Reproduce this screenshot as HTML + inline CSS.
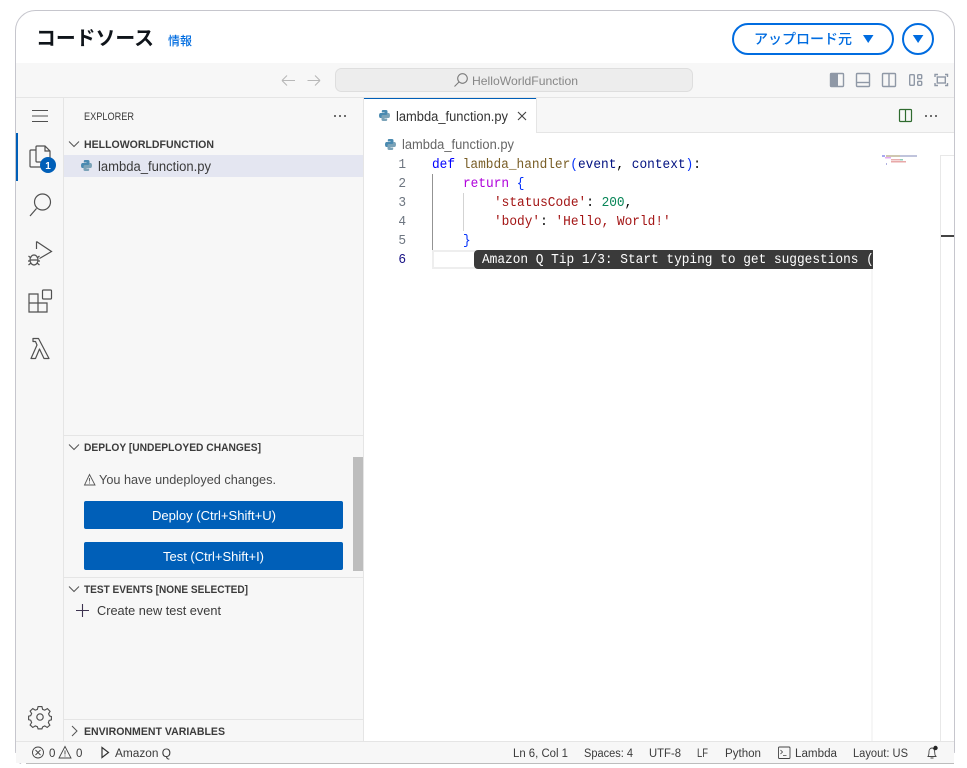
<!DOCTYPE html>
<html lang="ja"><head><meta charset="utf-8"><title>コードソース</title>
<style>
html,body{margin:0;padding:0;background:#fff;width:967px;height:768px;overflow:hidden}
svg{display:block}
text{font-family:"Liberation Sans","Noto Sans CJK JP",sans-serif;white-space:pre}
.s{font-size:12px;fill:#3b3b3b}
.b{font-size:11px;font-weight:bold;fill:#3b3b3b}
.m{font-family:"Liberation Mono",monospace;font-size:14px}
.st{font-size:11.5px;fill:#3b3b3b}
.ic{fill:none;stroke:#505050;stroke-width:1.2}
.lay{fill:none;stroke:#8f98a6;stroke-width:1.4}
</style></head><body>
<svg width="967" height="768" viewBox="0 0 967 768" xmlns="http://www.w3.org/2000/svg">
<defs>
<g id="py">
<g id="pyh"><path d="M4 0H7C8 0 8.500 .6 8.500 1.500V4.500C8.500 5.400 8 6 7 6H4C3.200 6 2.800 6.500 2.800 7.200V8H1.500C.5 8 0 7 0 5.500C0 4 .6 3 1.500 3H5.500V2.500H2.800V1.500C2.800 .5 3 0 4 0Z" fill="#4a8ab0"/></g>
<path d="M4 0H7C8 0 8.500 .6 8.500 1.500V4.500C8.500 5.400 8 6 7 6H4C3.200 6 2.800 6.500 2.800 7.200V8H1.500C.5 8 0 7 0 5.500C0 4 .6 3 1.500 3H5.500V2.500H2.800V1.500C2.800 .5 3 0 4 0Z" fill="#7ba3b8" transform="rotate(180 5.500 5.500)"/>
</g>
</defs>

<!-- card -->
<rect x="15.500" y="10.500" width="939" height="760" rx="20" fill="#fff" stroke="#c6c6cd"/>
<rect x="16" y="63" width="938" height="700" fill="#f7f7f7"/>
<rect x="0" y="764" width="967" height="10" fill="#fff"/>
<rect x="15" y="753" width="1" height="12" fill="#fff"/>
<rect x="954" y="753" width="2" height="12" fill="#fff"/>

<!-- header -->
<text x="36" y="45" font-size="20" font-weight="bold" fill="#0f141a" textLength="118" lengthAdjust="spacingAndGlyphs">コードソース</text>
<text x="168" y="45" font-size="12" font-weight="500" fill="#006ce0" textLength="24" lengthAdjust="spacingAndGlyphs">情報</text>
<rect x="733" y="24" width="160" height="30" rx="15" fill="#fff" stroke="#006ce0" stroke-width="2"/>
<text x="754" y="44" font-size="14" font-weight="500" fill="#006ce0" textLength="98" lengthAdjust="spacingAndGlyphs">アップロード元</text>
<path d="M863 35H873.500L868.200 43Z" fill="#006ce0"/>
<circle cx="918" cy="39" r="15" fill="#fff" stroke="#006ce0" stroke-width="2"/>
<path d="M912.800 35H923.400L918.100 43Z" fill="#006ce0"/>

<!-- title bar -->
<path d="M282 80.500H295M282 80.500L287 75.500M282 80.500L287 85.500M320 80.500H307.500M320 80.500L315 75.500M320 80.500L315 85.500" fill="none" stroke="#b8b8b8" stroke-width="1.100"/>
<rect x="335.500" y="68.500" width="357" height="23" rx="6" fill="#ededed" stroke="#dedede"/>
<circle cx="462.500" cy="78.500" r="4.800" fill="none" stroke="#7a7a7a" stroke-width="1.100"/>
<path d="M459 82L454.500 86.500" stroke="#7a7a7a" stroke-width="1.100"/>
<text x="472" y="85" font-size="12" fill="#868686" textLength="106" lengthAdjust="spacingAndGlyphs">HelloWorldFunction</text>

<g class="lay">
<rect x="830.500" y="73.500" width="13" height="13" rx="1"/>
<rect x="856.500" y="73.500" width="13" height="13" rx="1"/><path d="M856.500 82.500H869.500"/>
<rect x="882.500" y="73.500" width="13" height="13" rx="1"/><path d="M889 73.500V86.500"/>
<rect x="909.700" y="74.700" width="4.600" height="10.600" rx="1"/><rect x="917.700" y="74.700" width="4" height="4" rx="1"/><rect x="917.700" y="81.300" width="4" height="4" rx="1"/>
<path d="M935 77V74.500H938M945 74.500H947.500V77M947.500 83V85.500H945M938 85.500H935V83"/><rect x="937.300" y="77" width="8" height="6"/>
</g>
<rect x="830" y="73" width="8" height="14" rx="1" fill="#8f98a6"/>

<!-- frame lines -->
<rect x="16" y="97" width="938" height="1" fill="#e5e5e5"/>
<rect x="63" y="98" width="1" height="643" fill="#e5e5e5"/>
<rect x="363" y="98" width="1" height="643" fill="#e5e5e5"/>

<!-- editor bg -->
<rect x="364" y="133" width="590" height="608" fill="#fff"/>
<rect x="364" y="132" width="590" height="1" fill="#e5e5e5"/>
<rect x="364" y="98" width="172" height="35" fill="#fff"/>
<rect x="364" y="98" width="172" height="1" fill="#005fb8"/>
<rect x="536" y="98" width="1" height="34" fill="#e5e5e5"/>

<!-- activity bar -->
<path d="M32 110.500H48M32 116H48M32 121.500H48" stroke="#505050" stroke-width="1.100" fill="none"/>
<rect x="16" y="133" width="2" height="48" fill="#005fb8"/>
<g class="ic" stroke-width="1.400">
<path d="M36 150H31C30 150 30 151 30 151V166C30 167 31 167 31 167H43C44 167 44 166 44 166V163"/>
<path d="M37 146H45L50 151V162H37C36.400 162 36 161.600 36 161V147C36 146.400 36.400 146 37 146ZM45 146V151H50"/>
</g>
<circle cx="48" cy="165" r="8" fill="#005fb8"/>
<text x="48" y="169" font-size="10" font-weight="bold" fill="#fff" text-anchor="middle">1</text>

<g class="ic" stroke-width="1.300">
<circle cx="42.500" cy="202" r="8"/><path d="M36.500 208.500L30 216"/>
<path d="M36.500 241.500L51.500 251.500L39.500 258.500M36.500 241.500V249"/>
<ellipse cx="34" cy="260" rx="4" ry="5"/><path d="M28.500 256L31 258M28 261H30M28.500 265L31 263M39.500 256L37 258M40 261H38M39.500 265L37 263M30 260H38"/>
<path d="M29 294H38V303H47V312H29ZM29 303H38V312"/><rect x="42.500" y="290" width="9" height="9" rx="1"/>
<path d="M33 338.500H38.500L49 358.500H44L39.500 349L35.500 358.500H31L37 345L35.500 341.500H33Z" stroke-linejoin="round"/>
</g>
<g transform="translate(40 717)" class="ic" stroke-width="1.300">
<circle r="3.200"/>
<path d="M-2 -11H2L2.800 -8L5 -7.200L7.800 -8.800L10.600 -6L9 -3.400L10 -1.200L12 -.5V3L9.600 3.600L8.800 6L10.400 8.600L7.600 11L5 9.400L2.800 10.400L2 12.500H-2L-2.800 10.200L-5 9.400L-7.600 11L-10.400 8.400L-8.800 5.800L-9.800 3.400L-12 2.800V-.8L-9.800 -1.400L-8.800 -3.600L-10.400 -6.200L-7.600 -8.800L-5 -7.200L-2.800 -8Z" transform="scale(.95)"/>
</g>

<!-- sidebar -->
<text class="s" x="84" y="120" style="font-size:11px" textLength="50" lengthAdjust="spacingAndGlyphs">EXPLORER</text>
<g fill="#424242"><circle cx="335" cy="116" r="1"/><circle cx="340" cy="116" r="1"/><circle cx="345" cy="116" r="1"/></g>
<path d="M69 141.500L74 146.500L79 141.500" fill="none" stroke="#555" stroke-width="1"/>
<text class="b" x="84" y="148" textLength="130" lengthAdjust="spacingAndGlyphs">HELLOWORLDFUNCTION</text>
<rect x="64" y="155" width="299" height="22" fill="#e4e6f1"/>
<use href="#py" x="81" y="160"/>
<text x="98" y="171" font-size="13.500" fill="#3b3b3b" textLength="113" lengthAdjust="spacingAndGlyphs">lambda_function.py</text>

<rect x="64" y="435" width="299" height="1" fill="#e5e5e5"/>
<path d="M69 444.500L74 449.500L79 444.500" fill="none" stroke="#555" stroke-width="1"/>
<text class="b" x="84" y="451" textLength="177" lengthAdjust="spacingAndGlyphs">DEPLOY [UNDEPLOYED CHANGES]</text>
<rect x="353" y="457" width="10" height="114" fill="#bdbdbd"/>
<path d="M89.500 474.500L95 485H84.500ZM89.500 478V481.500M89.500 482.500V483.500" fill="none" stroke="#555" stroke-width=".9"/>
<text x="99" y="484" font-size="12.500" fill="#4a4a4a" textLength="177" lengthAdjust="spacingAndGlyphs">You have undeployed changes.</text>
<rect x="84" y="501" width="259" height="28" rx="2" fill="#005fb8"/>
<text x="152" y="520" font-size="13" fill="#fff" textLength="124" lengthAdjust="spacingAndGlyphs">Deploy (Ctrl+Shift+U)</text>
<rect x="84" y="542" width="259" height="28" rx="2" fill="#005fb8"/>
<text x="163" y="561" font-size="13" fill="#fff" textLength="101" lengthAdjust="spacingAndGlyphs">Test (Ctrl+Shift+I)</text>

<rect x="64" y="577" width="299" height="1" fill="#e5e5e5"/>
<path d="M69 586.500L74 591.500L79 586.500" fill="none" stroke="#555" stroke-width="1"/>
<text class="b" x="84" y="593" textLength="164" lengthAdjust="spacingAndGlyphs">TEST EVENTS [NONE SELECTED]</text>
<path d="M82.500 604V617M76 610.500H89" stroke="#3d3350" stroke-width="1.100" fill="none"/>
<text x="97" y="615" font-size="12.500" fill="#3b3b3b" textLength="124" lengthAdjust="spacingAndGlyphs">Create new test event</text>

<rect x="64" y="719" width="299" height="1" fill="#e5e5e5"/>
<path d="M72 726L77 731L72 736" fill="none" stroke="#555" stroke-width="1"/>
<text class="b" x="84" y="735" textLength="141" lengthAdjust="spacingAndGlyphs">ENVIRONMENT VARIABLES</text>

<!-- tabs -->
<use href="#py" x="379" y="110"/>
<text x="396" y="121" font-size="13.500" fill="#333" textLength="112" lengthAdjust="spacingAndGlyphs">lambda_function.py</text>
<path d="M518 112L526 120M526 112L518 120" stroke="#424242" stroke-width="1.100" fill="none"/>
<rect x="899.500" y="109.500" width="12" height="12" rx="1" fill="none" stroke="#2f6b2f" stroke-width="1.200"/>
<path d="M905.500 109.500V121.500" stroke="#2f6b2f" stroke-width="1.200"/>
<g fill="#424242"><circle cx="926" cy="116" r="1"/><circle cx="931" cy="116" r="1"/><circle cx="936" cy="116" r="1"/></g>

<!-- breadcrumb -->
<use href="#py" x="385" y="139"/>
<text x="402" y="149" font-size="13.500" fill="#666" textLength="112" lengthAdjust="spacingAndGlyphs">lambda_function.py</text>

<!-- code -->
<g fill="#6e7681" text-anchor="end">
<text class="m" transform="translate(406 168) scale(.9155 1)">1</text>
<text class="m" transform="translate(406 187) scale(.9155 1)">2</text>
<text class="m" transform="translate(406 206) scale(.9155 1)">3</text>
<text class="m" transform="translate(406 225) scale(.9155 1)">4</text>
<text class="m" transform="translate(406 244) scale(.9155 1)">5</text>
<text class="m" transform="translate(406 263) scale(.9155 1)" fill="#171184">6</text>
</g>
<rect x="433" y="251" width="441" height="17" fill="#fff" stroke="#eee" stroke-width="2"/>
<rect x="432" y="174" width="1" height="76" fill="#939393"/>
<rect x="463" y="193" width="1" height="38" fill="#d3d3d3"/>

<text class="m" transform="translate(432 168) scale(.9155 1)"><tspan fill="#0000ff">def</tspan><tspan fill="#000"> </tspan><tspan fill="#795e26">lambda_handler</tspan><tspan fill="#0431fa">(</tspan><tspan fill="#001080">event</tspan><tspan fill="#000">, </tspan><tspan fill="#001080">context</tspan><tspan fill="#0431fa">)</tspan><tspan fill="#000">:</tspan></text>
<text class="m" transform="translate(463 187) scale(.9155 1)"><tspan fill="#af00db">return</tspan><tspan fill="#000"> </tspan><tspan fill="#0431fa">{</tspan></text>
<text class="m" transform="translate(494 206) scale(.9155 1)"><tspan fill="#a31515">'statusCode'</tspan><tspan fill="#000">: </tspan><tspan fill="#098658">200</tspan><tspan fill="#000">,</tspan></text>
<text class="m" transform="translate(494 225) scale(.9155 1)"><tspan fill="#a31515">'body'</tspan><tspan fill="#000">: </tspan><tspan fill="#a31515">'Hello, World!'</tspan></text>
<text class="m" transform="translate(463 244) scale(.9155 1)" fill="#0431fa">}</text>

<rect x="474" y="250" width="402" height="19" rx="4" fill="#3a3a3a"/>
<text class="m" transform="translate(482 263) scale(.9155 1)" fill="#fff">Amazon Q Tip 1/3: Start typing to get suggestions (</text>

<!-- minimap -->
<rect x="871" y="269" width="2" height="472" fill="#f6f6f6"/>
<rect x="873" y="155" width="67" height="586" fill="#fff"/>
<rect x="940" y="155" width="14" height="1" fill="#e8e8e8"/>
<rect x="940" y="155" width="1" height="586" fill="#e8e8e8"/>
<rect x="941" y="235" width="13" height="2" fill="#444"/>
<rect x="882" y="155" width="3" height="2" fill="#a8a8f0"/><rect x="886" y="155" width="14" height="2" fill="#cfc7b0"/><rect x="900" y="155" width="17" height="2" fill="#c0c4dc"/>
<rect x="885" y="157" width="6" height="1.500" fill="#e5a8f0"/>
<rect x="891" y="159" width="9" height="1.500" fill="#e8b0b0"/><rect x="900" y="159" width="3" height="1.500" fill="#90cdb8"/>
<rect x="891" y="161" width="15" height="1.500" fill="#e8a8a8"/>
<rect x="886" y="163" width="1" height="2" fill="#b0b0e0"/>

<!-- status bar -->
<rect x="16" y="741" width="938" height="22" fill="#f7f7f7"/>
<rect x="16" y="741" width="938" height="1" fill="#e5e5e5"/>
<rect x="26" y="763" width="928" height="1" fill="#bdbdbd"/>
<circle cx="38" cy="752.500" r="5.500" fill="none" stroke="#444" stroke-width=".9"/>
<path d="M35.500 750L40.500 755M40.500 750L35.500 755" stroke="#444" stroke-width=".9"/>
<text class="st" x="49" y="757">0</text>
<path d="M65 746.500L71 758H59ZM65 750.500V754.500M65 755.500V756.500" fill="none" stroke="#444" stroke-width=".9"/>
<text class="st" x="76" y="757">0</text>
<path d="M102 747.500L108.500 752.500L102 757.500Z" fill="none" stroke="#333" stroke-width="1.200"/>
<text class="st" x="115" y="757" textLength="56" lengthAdjust="spacingAndGlyphs">Amazon Q</text>
<text class="st" x="513" y="757" textLength="55" lengthAdjust="spacingAndGlyphs">Ln 6, Col 1</text>
<text class="st" x="584" y="757" textLength="49" lengthAdjust="spacingAndGlyphs">Spaces: 4</text>
<text class="st" x="649" y="757" textLength="32" lengthAdjust="spacingAndGlyphs">UTF-8</text>
<text class="st" x="697" y="757" textLength="11" lengthAdjust="spacingAndGlyphs">LF</text>
<text class="st" x="725" y="757" textLength="36" lengthAdjust="spacingAndGlyphs">Python</text>
<rect x="778.500" y="747" width="11.500" height="11.500" rx="1" fill="none" stroke="#444" stroke-width=".9"/>
<path d="M780.500 750L782.500 752L780.500 754M783 755.500H786.500" fill="none" stroke="#444" stroke-width=".8"/>
<text class="st" x="795" y="757" textLength="42" lengthAdjust="spacingAndGlyphs">Lambda</text>
<text class="st" x="853" y="757" textLength="55" lengthAdjust="spacingAndGlyphs">Layout: US</text>
<path d="M928 756.500C929 755 929 753 929 751.500C929 749.500 930.500 748 932 748C933 748 934 749 934.500 750.500L935 755C935.500 756 936 756.500 936.500 756.500ZM930.500 758H933.500" fill="none" stroke="#444" stroke-width=".9"/>
<circle cx="935.500" cy="748" r="2.200" fill="#222"/>
</svg>
</body></html>
